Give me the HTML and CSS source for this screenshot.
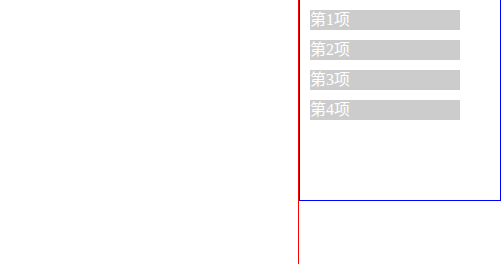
FILE: index.html
```html
<!DOCTYPE html>
<html lang="zh">
<head>
<meta charset="utf-8">
<title>列表</title>
<link rel="stylesheet" href="styles.css">
</head>
<body>
<div class="page">
  <div class="left"></div>
  <div class="right">
    <div class="box">
      <ul class="list">
        <li class="item">第1项</li>
        <li class="item">第2项</li>
        <li class="item">第3项</li>
        <li class="item">第4项</li>
      </ul>
    </div>
  </div>
</div>
</body>
</html>
```
FILE: styles.css
```css
html, body {
  margin: 0;
  padding: 0;
  background: #fff;
}
.page {
  display: flex;
  height: 264px;
  overflow: hidden;
}
.left {
  width: 298px;
  flex: none;
}
.right {
  flex: none;
  border-left: 1px solid #ff0000;
  height: 264px;
}
.box {
  box-sizing: content-box;
  width: 180px;
  height: 180px;
  padding: 10px;
  margin-top: -1px;
  border: 1px solid #0000ff;
}
.list {
  list-style: none;
  margin: 0;
  padding: 0;
}
.item {
  width: 150px;
  height: 20px;
  line-height: 20px;
  margin-bottom: 10px;
  background: #cccccc;
  color: #ffffff;
  font-family: "Liberation Serif", "Noto Sans CJK SC", serif;
  font-size: 16px;
}
```
